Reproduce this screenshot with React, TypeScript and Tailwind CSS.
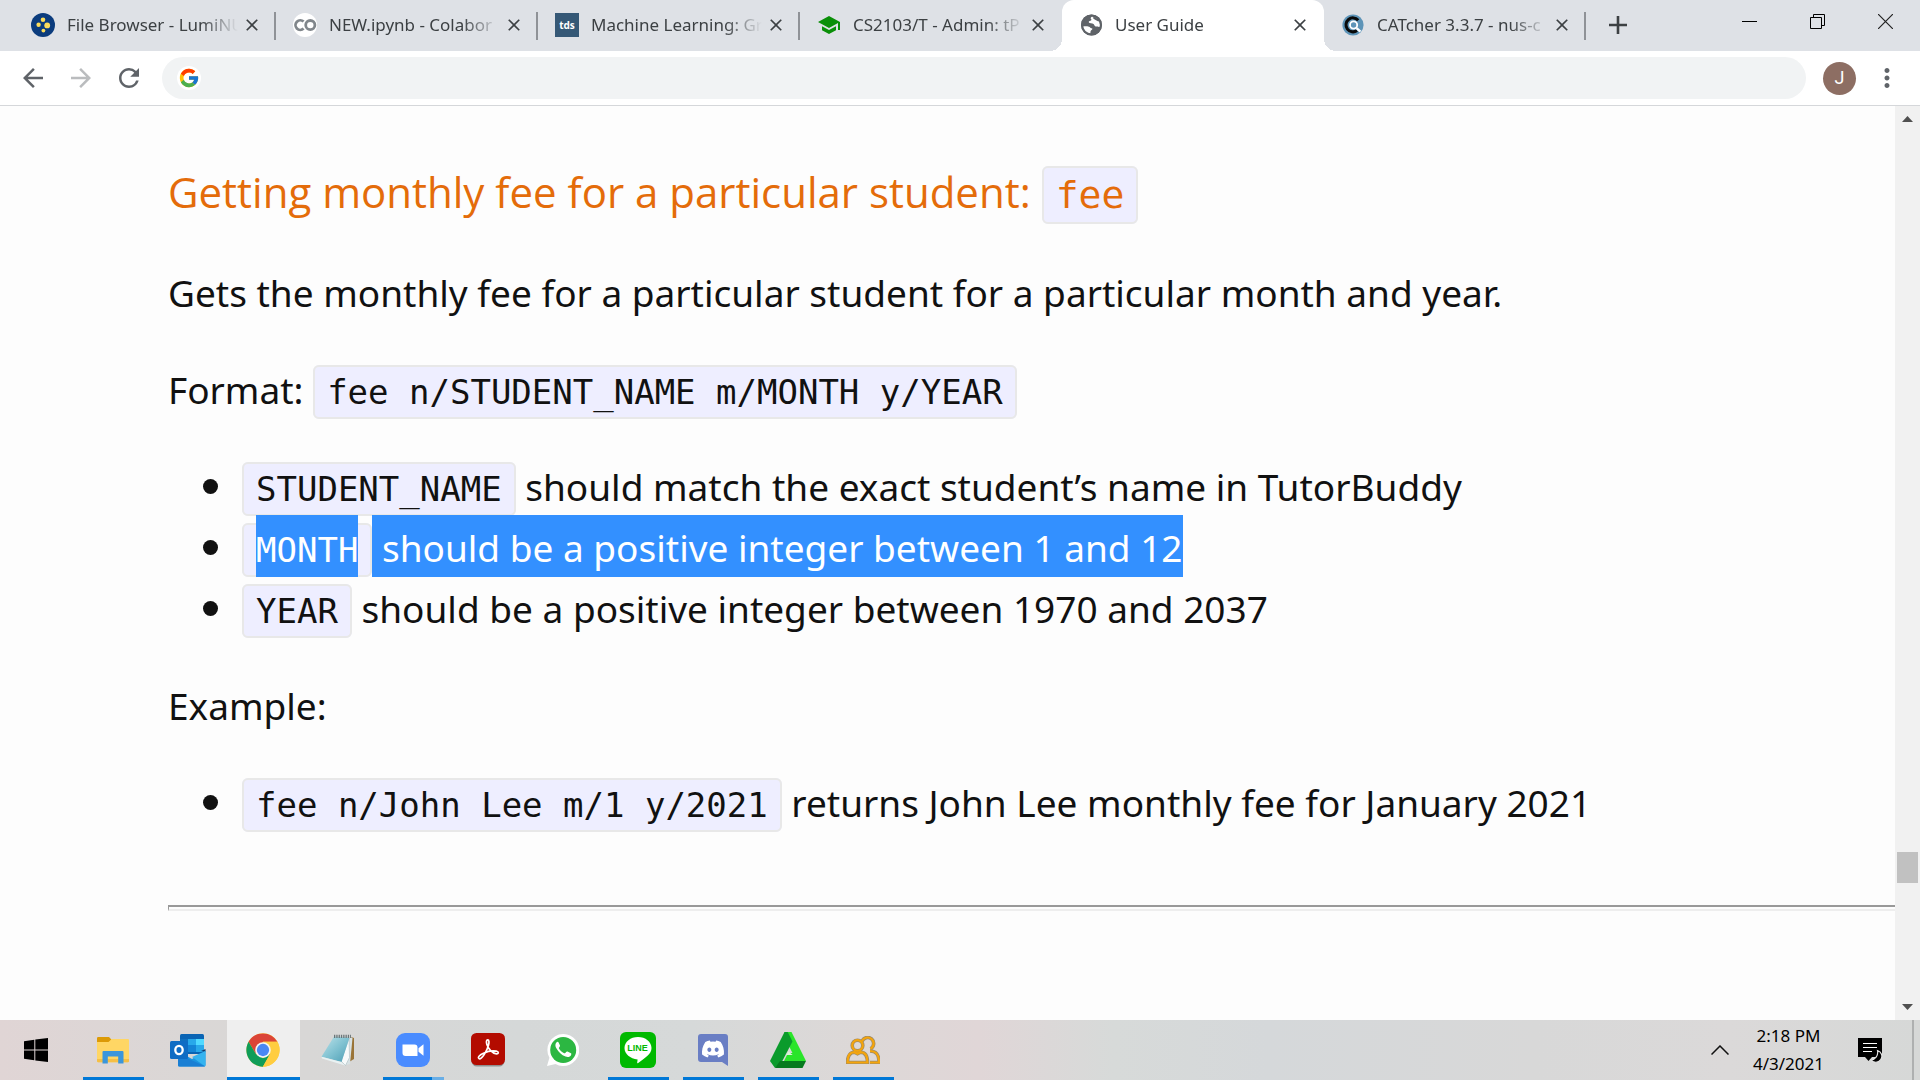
import type { ReactNode } from "react";
import { FcGoogle } from "react-icons/fc";
import { FaDiscord } from "react-icons/fa";
import { MdArrowBack, MdArrowForward, MdClose, MdMoreVert, MdRefresh, MdSchool } from "react-icons/md";

/* ---------- tab icons ---------- */

function LumiIcon() {
  return (
    <svg viewBox="0 0 24 24" className="size-6">
      <circle cx="12" cy="12" r="12" fill="#0b3c7d" />
      <g fill="#fbdc5c">
        <circle cx="12" cy="6.8" r="2.3" />
        <circle cx="7.6" cy="11.8" r="2.2" />
        <circle cx="16.2" cy="12.4" r="2.9" />
        <circle cx="12.4" cy="17.6" r="1.9" />
      </g>
    </svg>
  );
}

function ColabIcon() {
  return (
    <svg viewBox="0 0 24 24" className="size-6">
      <circle cx="12" cy="12" r="12" fill="#fff" />
      <g fill="none" stroke="#80868b" strokeWidth="2.8">
        <path d="M10.6 8.6A4.8 4.8 0 1 0 10.6 15.6" />
        <circle cx="17.3" cy="12.1" r="4.6" />
      </g>
    </svg>
  );
}

function TdsIcon() {
  return (
    <span className="flex size-6 items-center justify-center bg-[#355876] text-[10px] leading-none font-bold text-white">
      tds
    </span>
  );
}

function GlobeIcon() {
  return (
    <svg viewBox="0 0 24 24" className="size-6">
      <circle cx="12.500" cy="12" r="10.500" fill="#5f6368" />
      <path
        d="M4 13.500c1.500-.2 4-.3 6 .2 1 .3 1.200 1.300 2.500 1.500 1.500.2 1 1.300-.3 2-1 .6-.6 2.600-.9 3.600A8.600 8.600 0 0 1 4 13.500z"
        fill="#fff"
      />
      <path
        d="M13 3.500c-1.500 1-1.600 2.200-.8 2.700 1 .5-.4 1.600-1.600 1.800-1.300.3-1 1.600 0 1.900 1.600.4 4.200.3 4.700 2 .3 1.200 1.500 1.800 2.700 1.600 1.200-.2 1.700.8 2.700.5a8.600 8.600 0 0 0-3-8.300A8.600 8.600 0 0 0 13 3.500z"
        fill="#fff"
      />
      <path d="M14.500 4.200c1 1.800 3.500 2 5.500 3.600" stroke="#5f6368" strokeWidth="1.800" fill="none" />
      <circle cx="12.500" cy="12" r="9.500" fill="none" stroke="#5f6368" strokeWidth="2" />
    </svg>
  );
}

function CatcherIcon() {
  return (
    <svg viewBox="0 0 24 24" className="size-6">
      <circle cx="12" cy="12" r="10.6" fill="#5d94b8" />
      <path d="M17.2 7.2A7 7 0 1 0 16 17.6" fill="none" stroke="#0a0a0a" strokeWidth="3" />
      <circle cx="12.6" cy="12" r="3.6" fill="#5d94b8" stroke="#fff" strokeWidth="1.8" />
      <path d="M15.6 15.2l3.8 3.4" stroke="#fff" strokeWidth="2.4" />
    </svg>
  );
}

type TabInfo = { title: string; icon: ReactNode; active?: boolean; bar?: boolean };

const tabs: TabInfo[] = [
  { title: "File Browser - LumiNU", icon: <LumiIcon />, bar: true },
  { title: "NEW.ipynb - Colabor", icon: <ColabIcon />, bar: true },
  { title: "Machine Learning: Gr", icon: <TdsIcon />, bar: true },
  { title: "CS2103/T - Admin: tP", icon: <MdSchool className="size-6 text-[#0a8f08]" /> },
  { title: "User Guide", icon: <GlobeIcon />, active: true },
  { title: "CATcher 3.3.7 - nus-c", icon: <CatcherIcon />, bar: true },
];

function Tab({ title, icon, active, bar }: TabInfo) {
  return (
    <div
      className={
        "relative flex h-full w-[262px] items-center pr-3 pb-0.5 pl-[17px] " +
        (active ? "rounded-t-xl bg-white" : "")
      }
    >
      {active && (
        <>
          <span className="absolute bottom-0 -left-3 size-3 bg-[radial-gradient(circle_at_0_0,transparent_12px,white_12px)]" />
          <span className="absolute -right-3 bottom-0 size-3 bg-[radial-gradient(circle_at_100%_0,transparent_12px,white_12px)]" />
        </>
      )}
      <button className="flex min-w-0 flex-1 items-center gap-3 text-left">
        <span className="shrink-0">{icon}</span>
        <span className="flex-1 overflow-hidden [mask-image:linear-gradient(to_right,black_78%,transparent)] text-[17px] leading-6 whitespace-nowrap">
          {title}
        </span>
      </button>
      <button aria-label={"Close " + title} className="ml-0.5 flex size-6 items-center justify-center">
        <MdClose className="size-5" />
      </button>
      {bar && <span className="absolute top-3 right-0 h-7 w-0.5 bg-[#8f9297]" />}
    </div>
  );
}

function TabStrip() {
  return (
    <header className="flex h-[51px] shrink-0 bg-[#dee1e6] pl-3.5 text-[#3c4043]">
      {tabs.map((t) => (
        <Tab key={t.title} {...t} />
      ))}
      <button aria-label="New tab" className="ml-3.5 flex w-9 items-center justify-center pb-0.5">
        <svg viewBox="0 0 18 18" className="size-[18px]">
          <path d="M9 0v18M0 9h18" stroke="#3c4043" strokeWidth="2.6" />
        </svg>
      </button>
      <div className="ml-auto flex h-[43px]">
        <button aria-label="Minimize" className="flex w-[68px] items-center justify-center">
          <span className="h-px w-[15px] bg-black" />
        </button>
        <button aria-label="Restore" className="flex w-[68px] items-center justify-center">
          <svg viewBox="0 0 15 15" className="size-[15px]" fill="none" stroke="#000">
            <path d="M.5 3.5h11v11H.5zM3.5 3.5v-3h11v11h-3" />
          </svg>
        </button>
        <button aria-label="Close window" className="flex w-[69px] items-center justify-center">
          <svg viewBox="0 0 15 15" className="size-[15px]" stroke="#222" strokeWidth="1.2">
            <path d="M0 0l15 15M15 0L0 15" />
          </svg>
        </button>
      </div>
    </header>
  );
}

function Toolbar() {
  return (
    <div className="flex h-[55px] shrink-0 items-center border-b border-[#d5d7da] bg-white pl-[18px] text-[#5f6368]">
      <button aria-label="Back" className="mr-[18px]">
        <MdArrowBack className="size-[30px]" />
      </button>
      <button aria-label="Forward" className="mr-[18px] text-[#babcbe]">
        <MdArrowForward className="size-[30px]" />
      </button>
      <button aria-label="Reload" className="mr-[18px]">
        <MdRefresh className="size-[30px]" />
      </button>
      <div className="flex h-[42px] flex-1 items-center rounded-full bg-[#f1f3f4] pl-[15px]">
        <span className="flex size-6 items-center justify-center rounded-full bg-white">
          <FcGoogle className="size-[22px]" />
        </span>
        <input aria-label="Search or enter address" className="h-full flex-1 bg-transparent px-3 text-[17px] outline-none" />
      </div>
      <button
        aria-label="Profile"
        className="ml-[17px] flex size-[33px] items-center justify-center rounded-full bg-[#8d6e63] font-[Roboto] text-lg text-white"
      >
        J
      </button>
      <button aria-label="Menu" className="mr-[18px] ml-4">
        <MdMoreVert className="size-[30px]" />
      </button>
    </div>
  );
}

/* ---------- document ---------- */

const chip = "rounded-md border-2 border-[#e8e8e8] bg-[#eeeeff] px-3 py-[5px] leading-none";

function Code({ children }: { children: ReactNode }) {
  return <code className={chip + " font-['DejaVu_Sans_Mono',monospace] text-[34px]"}>{children}</code>;
}

function Item({ children }: { children: ReactNode }) {
  return (
    <li className="flex items-center">
      <span className="mr-6 size-[15px] shrink-0 rounded-full bg-[#111]" />
      <span>{children}</span>
    </li>
  );
}

function Guide() {
  return (
    <main className="flex-1 bg-[#fdfdfd] pt-14 pl-[168px] text-[37px] leading-[61px] text-[#111]">
      <h3 className="mb-10 font-['Open_Sans',sans-serif] text-[42px] leading-[60px] text-[#e46c0a]">
        Getting monthly fee for a particular student:{" "}
        <code className={chip + " font-['DejaVu_Sans_Mono',monospace] text-[38px]"}>fee</code>
      </h3>
      <div className="flex flex-col gap-9">
        <p>Gets the monthly fee for a particular student for a particular month and year.</p>
        <p>
          Format: <Code>fee n/STUDENT_NAME m/MONTH y/YEAR</Code>
        </p>
        <ul className="pl-[35px]">
          <Item>
            <Code>STUDENT_NAME</Code> should match the exact student’s name in TutorBuddy
          </Item>
          <Item>
            <Code>
              <span className="bg-[#3390ff] pt-[15px] pb-[7px] text-white">MONTH</span>
            </Code>
            <span className="bg-[#3390ff] pt-[7px] pb-1 text-white"> should be a positive integer between 1 and 12</span>
          </Item>
          <Item>
            <Code>YEAR</Code> should be a positive integer between 1970 and 2037
          </Item>
        </ul>
        <p>Example:</p>
        <ul className="pl-[35px]">
          <Item>
            <Code>fee n/John Lee m/1 y/2021</Code> returns John Lee monthly fee for January 2021
          </Item>
        </ul>
        <hr className="mt-9 h-1.5 border-t-2 border-b-2 border-l border-t-[#999] border-b-[#eee] border-l-[#999]" />
      </div>
    </main>
  );
}

function Scrollbar() {
  return (
    <div className="flex w-[25px] shrink-0 flex-col items-center bg-[#f1f1f1] py-2.5">
      <svg viewBox="0 0 11 6" className="h-1.5 w-[11px]" fill="#505050">
        <path d="M0 6L5.5 0 11 6z" />
      </svg>
      <div className="flex-[736]" />
      <div className="h-[31px] w-[21px] bg-[#c1c1c1]" />
      <div className="flex-[122]" />
      <svg viewBox="0 0 11 6" className="h-1.5 w-[11px]" fill="#505050">
        <path d="M0 0l5.5 6L11 0z" />
      </svg>
    </div>
  );
}

/* ---------- taskbar ---------- */

function StartIcon() {
  return (
    <svg viewBox="0 0 24 24" className="size-6" fill="#000">
      <path d="M0 3.3L10.3 1.7V11.4H0zM11.3 1.5L24 0V11.4H11.3zM0 12.4H10.3V22.2L0 20.8zM11.3 12.4H24V24L11.3 22.4z" />
    </svg>
  );
}

function ExplorerIcon() {
  return (
    <svg viewBox="0 0 32 27" className="w-8">
      <path d="M0 1.2Q0 0 1.2 0H12l3 3.2L12 6H0z" fill="#dc9a06" />
      <path d="M0 5h11.5l3.2-3H31q1 0 1 1v21q0 1.2-1.2 1.2H1.2Q0 25.200 0 24z" fill="#ffd664" />
      <path d="M0 22h32v2q0 1.200-1.200 1.200H1.200Q0 25.200 0 24z" fill="#f5bf45" />
      <path d="M5.500 26.500V15q0-1 1-1h19q1 0 1 1v11.500h-5.300V19.500H10.800v7z" fill="#3b96db" />
    </svg>
  );
}

function OutlookIcon() {
  return (
    <svg viewBox="0 0 36 33" className="w-9">
      <rect x="10" y="0" width="24" height="20" rx="1.500" fill="#0a64b4" />
      <path d="M10 5h8v6h-8z" fill="#1070bf" />
      <path d="M18 5h8v6h-8z" fill="#28a8ea" />
      <path d="M26 5h8v6h-8z" fill="#50d9ff" />
      <path d="M10 11h8v7h-8z" fill="#0f5ba6" />
      <path d="M18 11h8v7h-8z" fill="#1484d6" />
      <path d="M26 11h8v7h-8z" fill="#28a8ea" />
      <path d="M31 17l4.500-2v3z" fill="#123b6d" />
      <path d="M8 17l14 8 13.500-8v14q0 1.500-1.500 1.500H9.500Q8 32.500 8 31z" fill="#1c94e0" />
      <path d="M22 23l13.500-6v14q0 .8-.6 1.200z" fill="#35b3ef" />
      <path d="M8 20l27 12.200q-.4.300-1 .3H9.500Q8 32.500 8 31z" fill="#1a7fd4" />
      <rect x="0" y="7" width="18" height="18" rx="1.500" fill="#0f6cc4" />
      <ellipse cx="9" cy="16" rx="3.700" ry="4.200" fill="none" stroke="#fff" strokeWidth="2.300" />
    </svg>
  );
}

function ChromeIcon() {
  return (
    <svg viewBox="0 0 48 48" className="size-[34px]">
      <circle cx="24" cy="24" r="23.500" fill="#ffcd40" />
      <path d="M3.650 12.250A23.500 23.500 0 0 1 44.400 12.500H24L14 29.800z" fill="#db4437" />
      <path d="M3.650 12.250A23.500 23.500 0 0 0 23.800 47.500L34 29.800 24 35.500 14 29.800z" fill="#0f9d58" />
      <path d="M24 12.500h20.350A23.500 23.500 0 0 1 23.800 47.500L34 29.800z" fill="#ffcd40" />
      <circle cx="24" cy="24" r="11" fill="#f4f4f4" />
      <circle cx="24" cy="24" r="8.700" fill="#4a87f4" />
    </svg>
  );
}

function NotepadIcon() {
  return (
    <svg viewBox="0 0 34 32" className="w-[34px]">
      <defs>
        <linearGradient id="pad" x1="0" y1="0" x2="1" y2="1">
          <stop offset="0" stopColor="#bfe3ea" />
          <stop offset=".5" stopColor="#82c3d2" />
          <stop offset="1" stopColor="#4b9db4" />
        </linearGradient>
      </defs>
      <path d="M30 3l3 1v21l-5 3z" fill="#9a7437" />
      <path d="M29 3l2.500 1-2.500 26-6 1.500z" fill="#d8e2e4" />
      <path d="M28 4L20 27l4.500 4.500 4-8z" fill="#f7fafa" stroke="#a9bcc1" strokeWidth=".6" />
      <path d="M13 2.500l15.500 1.300L20.500 28 .5 22.800z" fill="url(#pad)" />
      <path d="M.5 22.800L20.500 28l3.500 3.500L1 24.500z" fill="#e9f2f3" />
      <path d="M13 2.300h17" stroke="#6a7477" strokeWidth="3.200" strokeDasharray="1.300 1" />
    </svg>
  );
}

function ZoomIcon() {
  return (
    <svg viewBox="0 0 34 34" className="size-[34px]">
      <rect width="34" height="34" rx="9" fill="#4a8cff" />
      <path d="M6.500 11.500h12q3 0 3 3v8.500h-12q-3 0-3-3zM22.500 15.300l5-4v11.500l-5-4z" fill="#fff" />
    </svg>
  );
}

function AcrobatIcon() {
  return (
    <svg viewBox="0 0 34 34" className="size-[34px]">
      <rect x=".5" y="1.500" width="33" height="32" rx="5.500" fill="#8f8f8f" />
      <rect width="34" height="32" rx="5.500" fill="#b30b00" />
      <path
        d="M8 25.500c-1.800-1.200 1-3.800 4.500-5.300 3.800-1.700 9.500-2.700 12.800-2 2.800.6 2.400 2.800.2 2.700-4-.1-8.500-5.400-9.600-9.300-.8-2.900-.5-4.700.8-4.700 1.500 0 1.600 2.600.7 5.600-1.300 4.600-5.300 12.100-8.200 13.200-.5.200-.9.100-1.200-.2z"
        fill="none"
        stroke="#fff"
        strokeWidth="1.700"
      />
    </svg>
  );
}

function WhatsAppIcon() {
  return (
    <svg viewBox="0 0 32 32" className="size-8">
      <path d="M16 0a16 16 0 1 1-7.500 30L0 32l2.400-8.200A16 16 0 0 1 16 0z" fill="#fff" />
      <circle cx="16.200" cy="16" r="13" fill="#2cb742" />
      <path
        d="M11.600 8.400c-.5-1-1.500-.8-2.200 0-1.400 1.600-1.300 3.700.1 6.200 2 3.600 5 6.600 9 8 2.700 1 4.700.1 5.500-1.400.4-.9.400-1.700 0-2l-3.500-1.700c-.6-.3-1 0-1.400.6-.7 1-1.200 1.500-2 1.100-2.200-.9-4-2.700-5.100-4.600-.4-.8.100-1.200.8-2.200.4-.5.200-1 0-1.500z"
        fill="#fff"
      />
    </svg>
  );
}

function LineIcon() {
  return (
    <span className="relative flex size-9 items-center justify-center rounded-md bg-[#00b900]">
      <svg viewBox="0 0 36 36" className="absolute size-9">
        <path d="M18 5c7.500 0 13.500 4.900 13.500 11 0 3-1.500 5.500-4 7.800-3 2.800-7 5.700-9.300 7.200-.8.500-1.100.2-1-.6l.4-3C10.300 26.700 4.500 22 4.500 16 4.500 9.900 10.500 5 18 5z" fill="#fff" />
      </svg>
      <span className="relative mb-1 font-['Liberation_Sans',sans-serif] text-[9px] leading-none font-bold text-[#00b900]">
        LINE
      </span>
    </span>
  );
}

function DiscordIcon() {
  return (
    <svg viewBox="0 0 30 32" className="w-[30px]">
      <path d="M3 0h24q3 0 3 3v29l-6-4H3q-3 0-3-3V3q0-3 3-3z" fill="#697ec4" />
      <FaDiscord x="3" y="3" size={24} color="#fff" />
    </svg>
  );
}

function TriangleIcon() {
  return (
    <svg viewBox="0 0 36 36" className="size-9">
      <path d="M14.500 0h7L36 29H14l4-8h4.500L18 12z" fill="#2ae52a" />
      <path d="M14.500 0h3.200L22.500 9.500 11 31.500 5 36 0 29z" fill="#0b9b2c" />
      <path d="M13 29h23l-3.500 7H5l5-7z" fill="#067a1e" />
      <path d="M18.500 19.500l4.200 3.500H16z" fill="#d9f3d9" />
    </svg>
  );
}

function PeopleIcon() {
  return (
    <svg viewBox="0 0 34 28" className="w-[34px]" fill="none">
      <g stroke="#9b8a6a" strokeWidth="3.600">
        <path d="M16 5.500a6 6 0 1 1 8.500 7.300M24 15c6 0 9 3 9 11.500h-9" />
        <circle cx="11.500" cy="9.500" r="5.300" />
        <path d="M1.500 26.500c0-7 3-10.300 7-10.300l3 1.500 3-1.500c4.500 0 7 3.300 7 10.300z" />
      </g>
      <g stroke="#f5a50c" strokeWidth="2.200">
        <path d="M16 5.500a6 6 0 1 1 8.500 7.300M24 15c6 0 9 3 9 11.500h-9" />
        <circle cx="11.500" cy="9.500" r="5.300" />
        <path d="M1.500 26.500c0-7 3-10.300 7-10.300l3 1.500 3-1.500c4.500 0 7 3.300 7 10.300z" />
      </g>
    </svg>
  );
}

type TaskApp = { name: string; icon: ReactNode; state?: "open" | "active" | "stacked" };

const apps: TaskApp[] = [
  { name: "File Explorer", icon: <ExplorerIcon />, state: "open" },
  { name: "Outlook", icon: <OutlookIcon /> },
  { name: "Chrome", icon: <ChromeIcon />, state: "active" },
  { name: "Notepad", icon: <NotepadIcon /> },
  { name: "Zoom", icon: <ZoomIcon />, state: "stacked" },
  { name: "Acrobat Reader", icon: <AcrobatIcon /> },
  { name: "WhatsApp", icon: <WhatsAppIcon /> },
  { name: "Line", icon: <LineIcon />, state: "open" },
  { name: "Discord", icon: <DiscordIcon />, state: "open" },
  { name: "Green triangle", icon: <TriangleIcon />, state: "open" },
  { name: "People", icon: <PeopleIcon />, state: "open" },
];

function TaskButton({ name, icon, state }: TaskApp) {
  return (
    <button
      aria-label={name}
      className={
        "relative mx-px flex w-[73px] items-center justify-center pr-0.5 " + (state === "active" ? "bg-[#efefef]" : "")
      }
    >
      {icon}
      {state === "active" && <span className="absolute inset-x-0 bottom-0 h-[3px] bg-[#0078d7]" />}
      {state === "open" && <span className="absolute inset-x-1.5 bottom-0 h-[3px] bg-[#0078d7]" />}
      {state === "stacked" && (
        <span className="absolute inset-x-1.5 bottom-0 flex h-[3px] bg-[#69aee6]">
          <span className="w-4/5 bg-[#0078d7]" />
        </span>
      )}
    </button>
  );
}

function Taskbar() {
  return (
    <footer className="flex h-[60px] shrink-0 bg-[linear-gradient(to_right,#e0d5d5,#dad7d6_10%,#d8d7d6_16%,#d5d8d8_27%,#d6d9d9_36%,#ddd8d7_45%,#e0d6d7_51%,#d7dad9_58%,#d5d8da_66%,#d8d8d8_80%,#dbd9d9_90%,#d6d8d7)]">
      <button aria-label="Start" className="flex w-[76px] items-center justify-center pr-1">
        <StartIcon />
      </button>
      {apps.map((a) => (
        <TaskButton key={a.name} {...a} />
      ))}
      <div className="ml-auto flex items-center text-black">
        <button aria-label="Show hidden icons" className="mr-6">
          <svg viewBox="0 0 18 10" className="h-2.5 w-[18px]" fill="none" stroke="#111" strokeWidth="1.500">
            <path d="M.5 9.500L9 1l8.500 8.500" />
          </svg>
        </button>
        <div className="mr-[34px] text-center text-[17px] leading-7">
          <div>2:18 PM</div>
          <div>4/3/2021</div>
        </div>
        <button aria-label="Notifications" className="mr-[29px]">
          <svg viewBox="0 0 25 25" className="size-[25px]">
            <path d="M0 0h24v19H14l-3.500 4L7 19H0z" fill="#000" />
            <path d="M5 5.500h14M5 9.500h14M5 13.500h9" stroke="#fff" strokeWidth="1.100" />
            <path d="M19.500 12.500a6 6 0 1 1-6.500 9.300c4 .2 7.500-4 6.500-9.300z" fill="#000" stroke="#e4e4e4" strokeWidth="1.200" />
          </svg>
        </button>
        <span className="mr-1.5 h-full w-0.5 bg-[#aeb0b0]" />
      </div>
    </footer>
  );
}

export default function App() {
  return (
    <div className="flex min-h-screen flex-col font-['Noto_Sans','Open_Sans',sans-serif]">
      <TabStrip />
      <Toolbar />
      <div className="flex flex-1">
        <Guide />
        <Scrollbar />
      </div>
      <Taskbar />
    </div>
  );
}
